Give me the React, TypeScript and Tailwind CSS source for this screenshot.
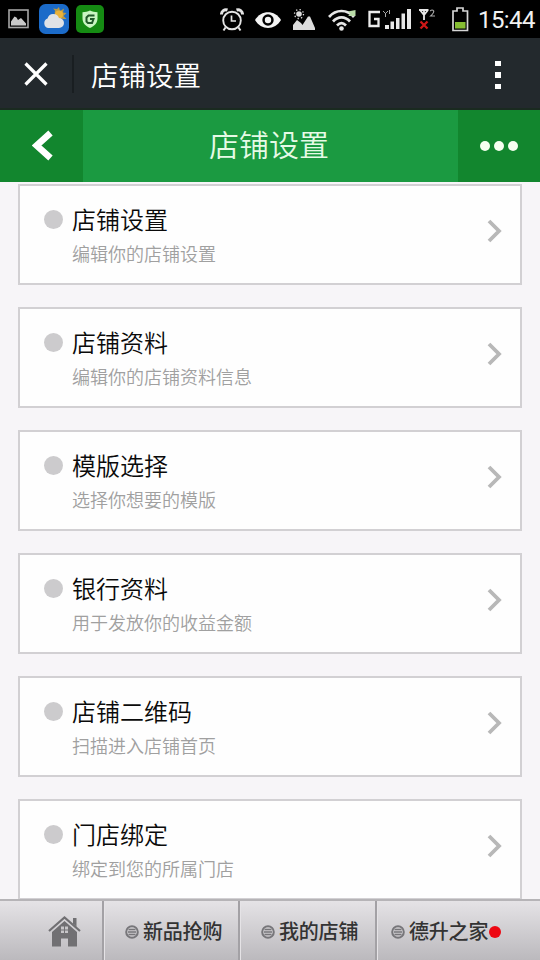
import React from "react";

const items = [
  { title: "店铺设置", desc: "编辑你的店铺设置" },
  { title: "店铺资料", desc: "编辑你的店铺资料信息" },
  { title: "模版选择", desc: "选择你想要的模版" },
  { title: "银行资料", desc: "用于发放你的收益金额" },
  { title: "店铺二维码", desc: "扫描进入店铺首页" },
  { title: "门店绑定", desc: "绑定到您的所属门店" },
];

function StatusBar() {
  return (
    <div className="flex h-[38px] shrink-0 items-center bg-black text-[#e4e4e4]">
      <svg className="ml-2 shrink-0" width="21" height="20" viewBox="0 0 21 20">
        <rect x="1" y="1" width="19" height="17.5" fill="none" stroke="#a5a5a5" strokeWidth="1.6" />
        <path d="M3 16.500V12.500l3.500-5 2 1 1.500 2.500 3-2 5 5.500v2z" fill="#c8c8c8" />
      </svg>
      <svg className="ml-2.5 shrink-0" width="30" height="30" viewBox="0 0 30 30">
        <rect width="30" height="30" rx="6.500" fill="#1b6bc9" />
        <path d="M20 3l1 4 4-2.500-1 4 3.500.5-3 3 3 3-4 0-8-4 .5-4.500-2-2 4 .5z" fill="#b99a45" />
        <circle cx="20" cy="10.500" r="4" fill="#e9b23a" />
        <path d="M9 24a5 5 0 0 1-.5-9.500 6 6 0 0 1 11.500-.5 5 5 0 0 1 0 10z" fill="#dfe2e6" />
      </svg>
      <svg className="ml-[7px] shrink-0" width="28" height="28" viewBox="0 0 28 28">
        <rect width="28" height="28" rx="5" fill="#158b13" />
        <path d="M14 5.500c2.500 1.300 4.500 1.700 7.500 1.700v6c0 5-3 7.500-7.500 9.800-4.500-2.300-7.500-4.800-7.500-9.800v-6c3 0 5-.4 7.500-1.700z" fill="#c9f5c2" />
        <path d="M18.500 10.500h-6l-2 2v4l1.500 1.500h4l1.500-4h-3.500" fill="none" stroke="#21582a" strokeWidth="2" />
      </svg>

      <svg className="ml-[116px] mt-0.5 shrink-0" width="24" height="24" viewBox="0 0 24 24" fill="none" stroke="currentColor">
        <circle cx="12" cy="12.500" r="8.800" strokeWidth="1.900" />
        <path d="M11.500 7.500v5.500H16" strokeWidth="1.700" />
        <path d="M5.500 19.500L3.500 22.500M18.500 19.500l2 3" strokeWidth="2" />
        <path d="M1.500 6.500A4.500 4.500 0 0 1 7.500 2M22.500 6.500A4.500 4.500 0 0 0 16.500 2" strokeWidth="3" />
      </svg>
      <svg className="ml-[11px] mt-0.5 shrink-0" width="26" height="18" viewBox="0 0 26 18">
        <path d="M0 9C6-1.500 20-1.500 26 9 20 19.500 6 19.500 0 9z" fill="#f4f4f4" />
        <circle cx="13" cy="9" r="5.700" fill="#000" />
        <circle cx="13" cy="9" r="3.200" fill="#f4f4f4" />
      </svg>
      <svg className="ml-[11px] mt-0.5 shrink-0" width="24" height="22" viewBox="0 0 24 22">
        <circle cx="7" cy="5" r="2.800" fill="#ddd" />
        <circle cx="7" cy="5" r="4.500" fill="none" stroke="#ddd" strokeWidth="1.300" strokeDasharray="1.300 2.230" />
        <path d="M1 21v-5l4-5 4 3 1.500 2 5.500-8.500h2l5 11.500v2z" fill="#ddd" />
      </svg>
      <svg className="ml-3 mt-px shrink-0" width="28" height="24" viewBox="0 0 28 24" fill="none" stroke="#e6e6e6" strokeWidth="2.700">
        <path d="M1 9C8 1 19 1 26 9M5 13.500c5-5.500 12-5.500 17 0M9 17.500c3-3 6-3 9 0" />
        <circle cx="13.500" cy="20.500" r="2.300" fill="#e6e6e6" stroke="none" />
        <path d="M27.500 2v6H20L22.500 6 20 3.500z" fill="#b9dba8" stroke="none" />
      </svg>
      <svg className="ml-3 shrink-0" width="44" height="24" viewBox="0 0 44 24">
        <path d="M12 5H1.500v14h9v-7H6" fill="none" stroke="#ececec" strokeWidth="2.300" />
        <path d="M15 4l2.500 2.500L20 4M17.500 6v4M21.500 3v4" fill="none" stroke="#aaa" strokeWidth="1" />
        <path d="M17 18h4v4h-4zM22.500 14.500h3.500V22h-3.500zM28 11h3.500v11H28zM33.500 6.500H37V22h-3.500zM39 2h4v20h-4z" fill="#e8e8e8" />
      </svg>
      <svg className="ml-[7px] shrink-0" width="18" height="24" viewBox="0 0 18 24" fill="none">
        <path d="M0 3h9.500M1 3l4 5 4-5M5 3v10" stroke="#e8e8e8" strokeWidth="1.800" />
        <path d="M11.200 4q2-2 3.500 0 .5 1.500-3 5h4.300" stroke="#aaa" strokeWidth="1.200" />
        <path d="M1.500 14.500l7 7M8.500 14.500l-7 7" stroke="#cf1717" strokeWidth="2.300" />
      </svg>
      <svg className="ml-[15px] shrink-0" width="17" height="26" viewBox="0 0 17 26">
        <path d="M5 2h6v3h4.500v19.500H1V5h4z" fill="none" stroke="#d5d5d5" strokeWidth="1.700" />
        <path d="M3 16h10.500v6.500H3z" fill="#86bd32" />
      </svg>
      <span className="ml-[9px] mt-0.5 whitespace-nowrap font-[Roboto,sans-serif] text-[24px] leading-none tracking-[-0.6px] text-[#f2f2f2]">15:44</span>
    </div>
  );
}

function BrowserBar() {
  return (
    <div className="flex h-[72px] shrink-0 items-center border-b-2 border-[#1a2a20] bg-[#23292d]">
      <svg className="ml-6 mt-0.5" width="24" height="24" viewBox="0 0 24 24">
        <path d="M1.500 1.500l21 21M22.500 1.500l-21 21" stroke="#fff" strokeWidth="3.200" />
      </svg>
      <div className="ml-[24px] mt-0.5 h-[38px] w-0.5 bg-[#191e21]" />
      <h1 className="ml-[17px] mt-0.5 text-[27.500px] font-[350] leading-9 text-white">店铺设置</h1>
      <div className="mr-[39px] mt-1 ml-auto flex flex-col gap-[6px]">
        <i className="h-[5.500px] w-[6px] bg-white" />
        <i className="h-[5.500px] w-[6px] bg-white" />
        <i className="h-[5.500px] w-[6px] bg-white" />
      </div>
    </div>
  );
}

function PageHeader() {
  return (
    <header className="flex h-[72px] shrink-0 bg-[#1b9a41]">
      <div className="flex w-[83px] items-center bg-[#12862e] pl-8">
        <svg width="22" height="32" viewBox="0 0 22 32">
          <path d="M18.500 3L4.500 15.500l14 12.500" fill="none" stroke="#fff" strokeWidth="6.500" />
        </svg>
      </div>
      <h2 className="flex-1 pr-[3px] text-center text-[30px] font-[350] leading-[67px] text-[#e6fae6]">店铺设置</h2>
      <div className="flex w-[82px] items-center gap-1 bg-[#12862e] pl-[22px]">
        <i className="size-2.5 rounded-full bg-[#f6fff0]" />
        <i className="size-2.5 rounded-full bg-[#f6fff0]" />
        <i className="size-2.5 rounded-full bg-[#f6fff0]" />
      </div>
    </header>
  );
}

function Card({ title, desc }: { title: string; desc: string }) {
  return (
    <li className="flex h-[101px] shrink-0 border-2 border-[#d2d0d3] bg-[#fefefe]">
      <i className="ml-6 mt-[23.500px] size-[19px] rounded-full bg-[#cccbcd]" />
      <div className="ml-[9px] mt-[15px]">
        <h3 className="text-[24px] font-[350] leading-9 text-[#0a0a0a]">{title}</h3>
        <p className="mt-px text-[18px] font-[350] leading-[30px] text-[#a0a0a0]">{desc}</p>
      </div>
      <svg className="mr-[17px] ml-auto mt-8" width="18" height="26" viewBox="0 0 18 26">
        <path d="M4 3l10 10L4 23" fill="none" stroke="#b8b8b8" strokeWidth="3.800" />
      </svg>
    </li>
  );
}

function MenuMark() {
  return (
    <svg className="mt-0.5 shrink-0" width="14" height="14" viewBox="0 0 14 14" fill="none" stroke="#77767a">
      <circle cx="7" cy="7" r="5.800" strokeWidth="2" />
      <path d="M3.500 4.500h7M3 7h8M3.500 9.500h7" strokeWidth="1.300" />
    </svg>
  );
}

function Tab({ label, dot = false }: { label: string; dot?: boolean }) {
  return (
    <div className="flex items-center gap-1 border-l-2 border-[#a3a1a5] pl-[21px] shadow-[inset_1px_0_#e5e3e6]">
      <MenuMark />
      <span className="whitespace-nowrap text-[20px] font-medium leading-[60px] tracking-[-0.2px] text-[#333]">{label}</span>
      {dot && <i className="-ml-[3px] mt-0.5 size-3 shrink-0 rounded-full bg-[#ed0712]" />}
    </div>
  );
}

function BottomBar() {
  return (
    <nav className="grid h-[61px] shrink-0 grid-cols-[102px_136px_137px_165px] border-t-2 border-[#b6b4b7] bg-linear-to-b from-[#e5e3e6] to-[#bbb9bd]">
      <div className="pl-12 pt-[14px]">
        <svg width="34" height="34" viewBox="0 0 34 34">
          <path d="M25 3h3.500v9L25 8.500z" fill="#717073" />
          <path d="M1 16L16.500 2.500 32 16" fill="none" stroke="#717073" strokeWidth="2.200" />
          <path d="M4 17L16.500 6 29 17v14.500H20v-8h-7v8H4z" fill="#717073" />
          <path d="M13 11.500h3v3h-3zM17 11.500h3v3h-3zM13 15.500h3v2.500h-3zM17 15.500h3v2.500h-3z" fill="#c8c6c9" />
        </svg>
      </div>
      <Tab label="新品抢购" />
      <Tab label="我的店铺" />
      <div className="[&>div]:h-full [&>div]:pl-[14px]">
        <Tab label="德升之家" dot />
      </div>
    </nav>
  );
}

export default function App() {
  return (
    <div className="flex h-[960px] w-[540px] flex-col overflow-hidden bg-[#f7f5f8] font-['Noto_Sans_CJK_SC',sans-serif]">
      <StatusBar />
      <BrowserBar />
      <PageHeader />
      <ul className="flex min-h-0 flex-1 flex-col gap-[22px] overflow-hidden px-[18px] pt-0.5">
        {items.map((item) => (
          <Card key={item.title} {...item} />
        ))}
      </ul>
      <BottomBar />
    </div>
  );
}
